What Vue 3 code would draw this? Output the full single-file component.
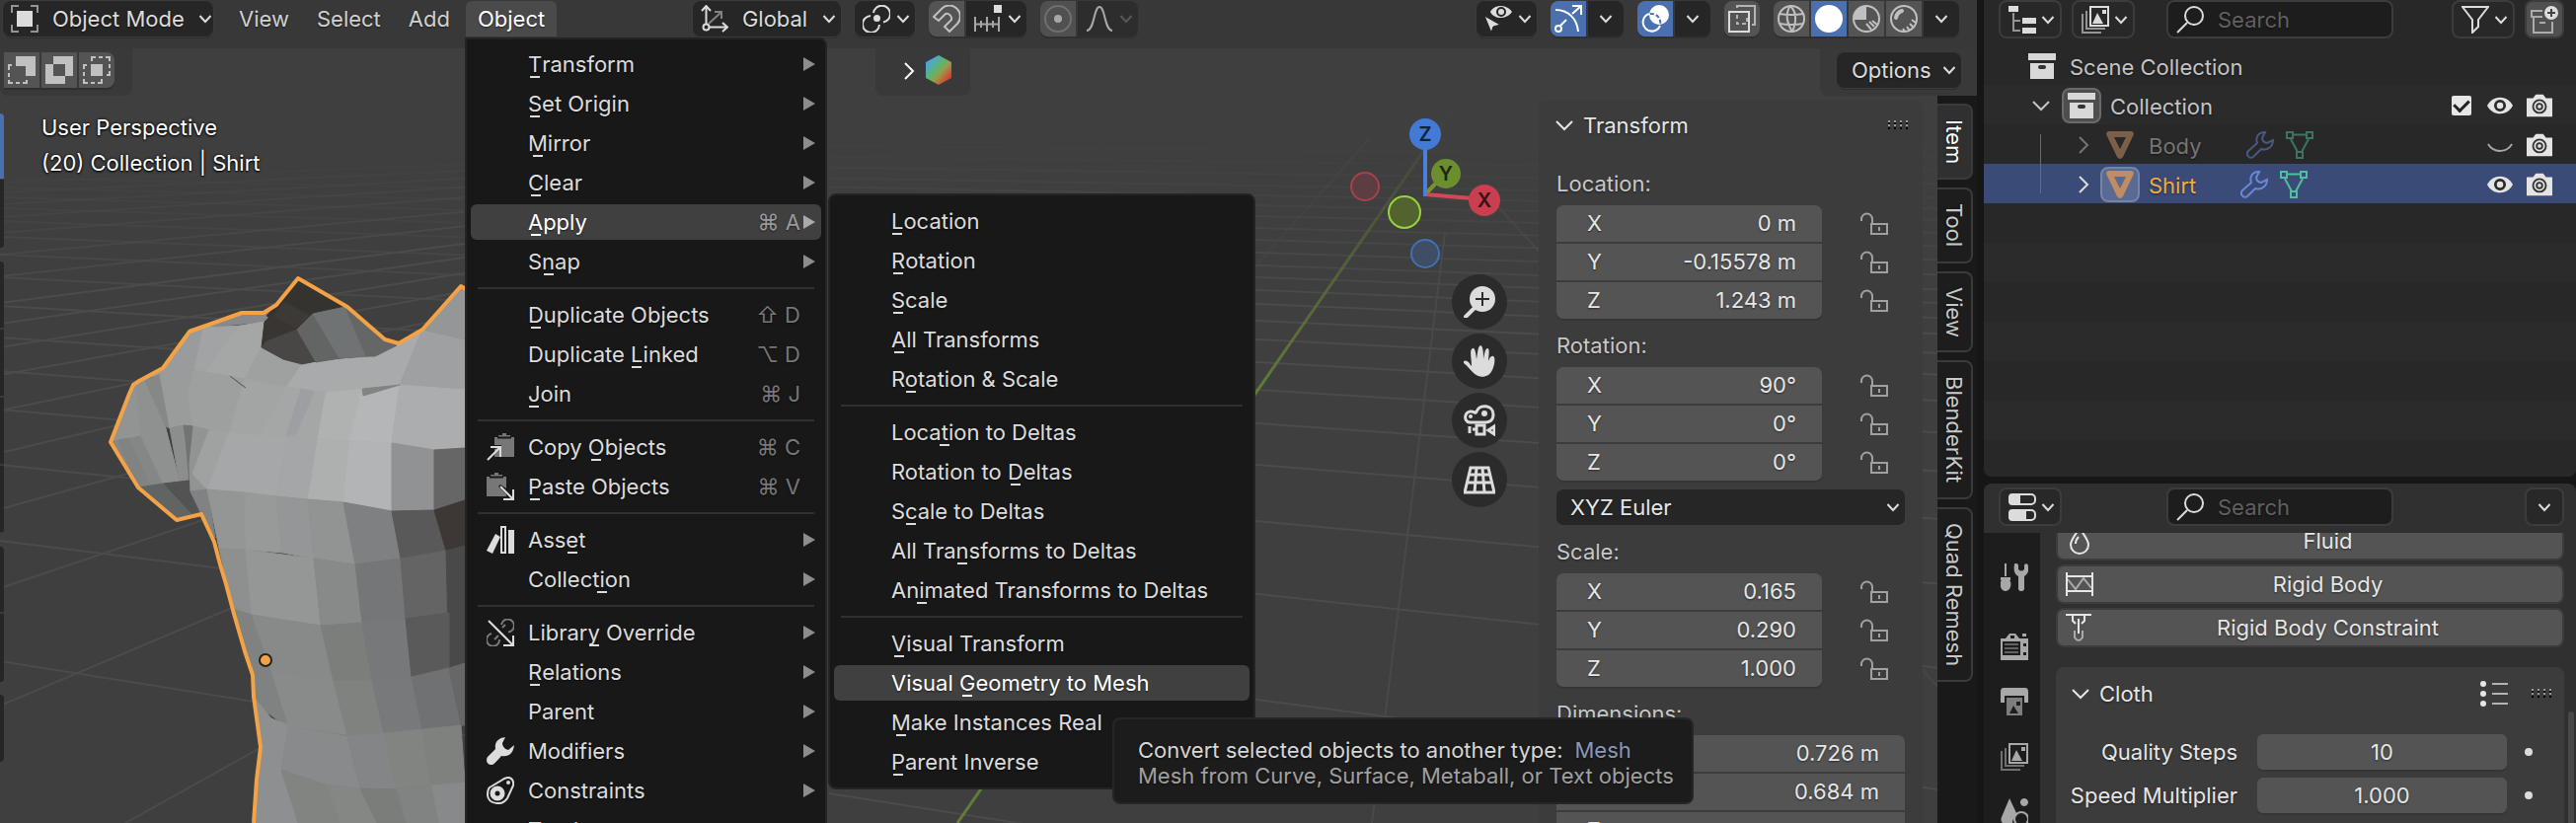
<script setup>
import { ref } from 'vue'

const split = (label) => {
  const i = label.indexOf('_')
  return i < 0
    ? { pre: label, key: '', post: '' }
    : { pre: label.slice(0, i), key: label[i + 1], post: label.slice(i + 2) }
}
const item = (label, extra = {}) => ({ ...split(label), ...extra })
const sep = { sep: true }

const applyMenu = [
  item('_Location'), item('_Rotation'), item('_Scale'), item('_All Transforms'), item('R_otation & Scale'),
  sep,
  item('Loca_tion to Deltas'), item('Rotation to _Deltas'), item('S_cale to Deltas'),
  item('All Tra_nsforms to Deltas'), item('An_imated Transforms to Deltas'),
  sep,
  item('_Visual Transform'), item('Visual _Geometry to Mesh', { tip: true }),
  item('_Make Instances Real'), item('_Parent Inverse'),
]

const objectMenu = [
  item('_Transform', { arrow: true }), item('_Set Origin', { arrow: true }),
  item('_Mirror', { arrow: true }), item('_Clear', { arrow: true }),
  item('_Apply', { arrow: true, keys: '⌘ A', sub: applyMenu }), item('S_nap', { arrow: true }),
  sep,
  item('_Duplicate Objects', { keys: '⇧ D' }), item('Duplicate _Linked', { keys: '⌥ D' }), item('_Join', { keys: '⌘ J' }),
  sep,
  item('Copy _Objects', { keys: '⌘ C', icon: 'copy' }), item('_Paste Objects', { keys: '⌘ V', icon: 'paste' }),
  sep,
  item('Ass_et', { arrow: true, icon: 'asset' }), item('Collect_ion', { arrow: true }),
  sep,
  item('Librar_y Override', { arrow: true, icon: 'override' }), item('_Relations', { arrow: true }),
  item('Parent', { arrow: true }), item('Modifiers', { arrow: true, icon: 'wrench' }),
  item('Constraints', { arrow: true, icon: 'constraint' }), item('Track', { arrow: true }),
]

const groups = ref([
  { name: 'Location', lock: true, rows: [['X', '0 m'], ['Y', '-0.15578 m'], ['Z', '1.243 m']] },
  { name: 'Rotation', lock: true, rows: [['X', '90°'], ['Y', '0°'], ['Z', '0°']], mode: 'XYZ Euler' },
  { name: 'Scale', lock: true, rows: [['X', '0.165'], ['Y', '0.290'], ['Z', '1.000']] },
  { name: 'Dimensions', lock: false, rows: [['X', '0.726 m'], ['Y', '0.684 m'], ['Z', '']] },
])
const tabs = ['Item', 'Tool', 'View', 'BlenderKit', 'Quad Remesh']
const navs = ['nav-zoom', 'nav-hand', 'nav-camera', 'nav-grid']
const navNames = ['Zoom', 'Pan', 'Camera view', 'Perspective']
const physics = [['Fluid', 'fluid'], ['Rigid Body', 'rigid'], ['Rigid Body Constraint', 'rigidcon']]
const cloth = [['Quality Steps', '10'], ['Speed Multiplier', '1.000']]
const propTabs = [['tools', 'Tool'], ['render', 'Render'], ['output', 'Output'], ['viewlayer', 'View Layer'], ['scene', 'Scene']]

/* floor grid: y on the left edge and slope of each line */
const leftDown = [180, 190, 200, 211, 224, 240, 258, 281, 310, 342, 376, 415, 471, 548, 670].map((y) => ({
  x1: 0, y1: y, x2: 472, y2: y + 472 * (y - 100) * 0.00028, o: Math.min(1, (y - 150) / 150),
}))
const leftUp = [185, 195, 207, 220, 236, 258, 280, 307, 328, 352, 380, 416, 459, 516, 596, 715, 905].map((y) => ({
  x1: 0, y1: y, x2: 472, y2: y - 472 * (y - 130) * 0.00072, o: Math.min(1, (y - 150) / 150),
}))
const right = [140, 152, 164, 176, 188, 198, 208, 219, 231, 243, 256, 269, 281, 294, 308, 325, 344, 367, 395, 429, 471, 528, 602, 709].map((y) => ({
  x1: 840, y1: y - 434 * (0.02 + (y - 200) * 0.00022), x2: 2004, y2: y + 730 * (0.02 + (y - 200) * 0.00022), o: Math.max(0.1, Math.min(1, (y - 120) / 180)),
}))
const floor = [
  ...leftDown, ...leftUp, ...right,
  { x1: 840, y1: 804, x2: 1100, y2: 845, o: 1 },
  { x1: 1464, y1: 236, x2: 1390, y2: 834, o: 0.9 },
  { x1: 1388, y1: 140, x2: 1270, y2: 272, o: 0.35 },
  { x1: 1500, y1: 190, x2: 2004, y2: 740, o: 0.7 },
]

const faces = [
  ['112,448 133,394 138,387 143,386 143,442', '#929494'],
  ['112,448 143,442 165,490 140,494', '#848786'],
  ['120,446 130,444 152,492 140,494', '#808382'],
  ['138,387 150,380 168,434 182,488 165,490 143,442', '#8f9191'],
  ['147,386 162,379 172,434 168,432', '#858886'],
  ['162,379 197,375 212,400 196,432 186,431 172,434', '#999c9b'],
  ['172,434 186,431 188,445 191,487 182,488', '#8b8e8c'],
  ['186,431 196,432 192,487 188,445', '#717473'],
  ['140,494 166,490 196,522 179,527', '#606463'],
  ['166,490 191,487 204,521 196,522', '#535353'],
  ['165,373 192,336 206,332 197,375 162,379 150,383', '#999b9c'],
  ['192,334 245,317 267,317 280,309 268,326 206,332', '#87898c'],
  ['206,332 243,330 232,343 208,377 197,375', '#a1a3a4'],
  ['243,330 268,326 265,352 248,384 208,377 232,343', '#a5a7a6'],
  ['265,352 287,364 306,369 290,392 248,384', '#9fa1a0'],
  ['306,369 345,364 380,361 404,348 428,334 405,390 330,398 290,392', '#a8aaab'],
  ['428,334 471,344 471,395 405,390', '#9fa0a1'],
  ['428,334 467,290 471,292 471,344', '#949698'],
  ['197,375 248,384 232,438 212,436 196,432 190,400', '#9da09f'],
  ['248,384 290,392 262,441 232,438', '#a3a5a4'],
  ['290,392 330,398 322,445 262,441', '#a5a7a7'],
  ['305,394 318,397 300,440 290,442', '#9d9fa2'],
  ['330,398 367,394 354,447 322,445', '#b0b2b2'],
  ['367,394 405,390 397,449 354,447', '#b5b6b8'],
  ['405,390 471,395 471,454 440,456 397,449', '#abadae'],
  ['367,394 405,390 368,401', '#828484'],
  ['233,381 240,386 249,393 243,389', '#696b6b'],
  ['196,432 212,436 210,496 193,498 192,470', '#929494'],
  ['212,436 232,438 210,496 195,480', '#a0a2a1'],
  ['232,438 262,441 292,443 281,503 210,496', '#a6a7a8'],
  ['292,443 322,445 312,506 281,503', '#a5a6a8'],
  ['322,445 354,447 348,509 312,506', '#aeb0b0'],
  ['354,447 397,449 397,518 348,509', '#b3b4b6'],
  ['397,449 440,456 440,517 397,518', '#909294'],
  ['440,456 471,454 471,507 440,517', '#666'],
  ['193,498 210,496 218,545 204,521', '#808383'],
  ['210,496 248,499 249,557 222,556', '#949695'],
  ['248,499 280,503 286,560 249,557', '#989a99'],
  ['280,503 312,506 318,566 286,560', '#949697'],
  ['312,506 348,509 360,572 318,566', '#929493'],
  ['348,509 397,518 406,566 360,572', '#7e8082'],
  ['397,518 440,517 452,558 406,566', '#595959'],
  ['440,517 471,507 471,553 452,558', '#3d3736'],
  ['222,556 249,557 255,623 236,617', '#8d908f'],
  ['249,557 318,566 325,634 255,623', '#959796'],
  ['318,566 360,572 367,631 325,634', '#888a8a'],
  ['360,572 406,566 411,627 367,631', '#757678'],
  ['406,566 452,558 455,621 411,627', '#646464'],
  ['452,558 471,553 471,675 455,677', '#494949'],
  ['236,617 255,623 275,680 292,738 258,712 256,684', '#7f8281'],
  ['255,623 325,634 338,690 275,680', '#888a89'],
  ['325,634 367,631 377,689 338,690', '#7c7e7c'],
  ['367,631 411,627 417,686 377,689', '#77787a'],
  ['411,627 455,621 455,677 417,686', '#5a5a5a'],
  ['257,706 275,728 295,736 320,834 257,834 264,757', '#8d8f91'],
  ['275,680 338,690 352,745 292,736', '#898b8a'],
  ['338,690 377,689 389,743 352,746', '#80827f'],
  ['377,689 417,686 428,739 389,743', '#78797b'],
  ['417,686 455,677 467,735 428,739', '#707173'],
  ['455,677 471,672 471,735 467,735', '#666769'],
  ['292,736 352,746 365,799 330,795 285,780', '#898a8b'],
  ['352,746 389,743 402,800 365,799', '#848587'],
  ['389,743 428,739 437,796 402,800', '#828482'],
  ['428,739 467,735 471,793 437,796', '#7f817f'],
  ['285,780 330,795 345,834 302,834', '#828482'],
  ['330,795 365,799 382,834 345,834', '#858785'],
  ['365,799 402,800 412,834 382,834', '#7b7d7b'],
  ['402,800 437,796 445,834 412,834', '#818382'],
  ['437,796 471,793 471,834 445,834', '#88898b'],
  ['302,282 350,311 317,318 301,334 270,320 280,309', '#353330'],
  ['288,306 315,320 301,334 276,322', '#3d3936'],
  ['268,326 276,320 301,334 270,347 265,352', '#383532'],
  ['301,334 320,366 306,369 287,364 265,352 270,346', '#494745'],
  ['317,318 344,363 320,367 301,334', '#636464'],
  ['317,318 350,311 372,361 344,363', '#707373'],
  ['350,311 388,345 402,350 380,361 371,361', '#656767'],
]
const outline = '257,834 260,790 264,757 257,706 256,684 248,660 237,622 229,592 223,572 217,549 204,521 179,527 140,494 112,448 131,399 135,390 141,386 165,373 192,336 245,317 267,317 280,309 302,282 352,311 390,344 404,348 428,334 467,290 474,294'
</script>

<template>
  <svg class="defs" aria-hidden="true">
    <symbol id="chev" viewBox="0 0 14 10"><path d="M1.500 2L7 8L12.500 2" class="st" /></symbol>
    <symbol id="chev-r" viewBox="0 0 12 20"><path d="M2 2L10 10L2 18" class="st" /></symbol>
    <symbol id="chev-d" viewBox="0 0 20 12"><path d="M2 2L10 10L18 2" class="st" /></symbol>
    <symbol id="tri" viewBox="0 0 12 14"><path d="M0 0L12 7L0 14Z" fill="currentColor" /></symbol>
    <symbol id="mode" viewBox="0 0 28 28"><path d="M1 8V1H8M20 1H27V8M27 20V27H20M8 27H1V20" class="st" opacity=".6" /><path d="M6 6H22V22H6Z" fill="currentColor" /></symbol>
    <symbol id="sel-sub" viewBox="0 0 28 28"><path d="M8 0H28V20H18V10H8Z" fill="currentColor" /><path d="M4 9H1V14M1 17V21M1 24V27H5M8 27H12M15 27H19V24" class="st" /></symbol>
    <symbol id="sel-dif" viewBox="0 0 28 28"><path d="M8 0H28V20H20V28H0V8H8ZM8 8V20H20V8Z" fill-rule="evenodd" fill="currentColor" /></symbol>
    <symbol id="sel-int" viewBox="0 0 28 28"><path d="M8 8H20V20H8Z" fill="currentColor" /><path d="M4 9H1V13M1 16V20M1 23V27H5M8 27H12M15 27H19V23M9 5V1H13M16 1H20M23 1H27V5M27 8V12M27 15V19H24" class="st" /></symbol>
    <symbol id="orient" viewBox="0 0 28 28"><g class="st"><path d="M5.500 19V1M1 6L5.500 1L10 6M9 22.500H26M22 18L27 22.500L22 27" /><circle cx="5.500" cy="22.500" r="3" /><path d="M8 19L20 8M14 7H21V14" opacity=".5" /></g></symbol>
    <symbol id="pivot" viewBox="0 0 28 28"><g class="st"><path d="M11 8A8.500 8.500 0 1 1 21 17.500" /><path d="M8 11A8.500 8.500 0 1 0 17 20" /></g><circle cx="14.500" cy="13.500" r="3.500" fill="currentColor" /></symbol>
    <symbol id="magnet" viewBox="0 0 28 28"><path d="M1 12L10 3A11 11 0 0 1 25 19L17 27L12 22L19 15A5 5 0 0 0 13 9L6 16Z" class="st" /></symbol>
    <symbol id="increment" viewBox="0 0 28 28"><path d="M20 0H28V8H20Z" fill="currentColor" /><path d="M1 12V27M13 12V27M25 12V27M1 19.500H25M7 16V23M19 16V23" class="st" opacity=".7" /></symbol>
    <symbol id="prop" viewBox="0 0 28 28"><circle cx="14" cy="14" r="13" class="st" opacity=".35" /><circle cx="14" cy="14" r="4" fill="currentColor" /></symbol>
    <symbol id="bell" viewBox="0 0 28 28"><path d="M1 26C9 26 8 2 14 2S19 26 27 26" class="st" /></symbol>
    <symbol id="visible" viewBox="0 0 28 28"><path d="M6 7C10 -1 23 -1 28 7C23 15 10 15 6 7Z" fill="currentColor" /><circle cx="17" cy="7" r="4" fill="none" stroke="#262626" stroke-width="2" /><path d="M0 11L16 20L9 22L7 28Z" fill="currentColor" stroke="#262626" /></symbol>
    <symbol id="gizmo" viewBox="0 0 28 28"><g class="st"><path d="M1 5C14 5 23 14 24 27M6 21L12 15M18 9L27 1M18 1H27V10" /><circle cx="4" cy="24" r="3" /></g></symbol>
    <symbol id="overlay" viewBox="0 0 28 28"><circle cx="18" cy="10" r="10" fill="currentColor" /><path d="M8 9A9 9 0 1 0 19 21" class="st" /><path d="M9 9A9 9 0 0 1 19 20" fill="none" stroke="#4a70b0" stroke-width="2" stroke-dasharray="4 2" /></symbol>
    <symbol id="xray" viewBox="0 0 28 28"><g class="st"><path d="M1 7H21V27H1Z" /><path d="M9 3V1H27V20H24" opacity=".7" /><path d="M9 10V19H19V13" stroke-dasharray="4 3" opacity=".7" /></g></symbol>
    <symbol id="wire" viewBox="0 0 28 28"><g class="st"><circle cx="14" cy="14" r="13" /><path d="M13 1C7 9 10 20 15 27M13 1C21 9 18 20 15 27M2 9Q14 11 26 9M2 19Q14 21 26 19" /></g></symbol>
    <symbol id="solid" viewBox="0 0 28 28"><circle cx="14" cy="14" r="14" fill="currentColor" /></symbol>
    <symbol id="material" viewBox="0 0 28 28"><circle cx="14" cy="14" r="13" class="st" /><path d="M14 1V15H1A13 13 0 0 1 14 1Z" fill="currentColor" /><path d="M14 19L19 25M17 17L22 22M20 16L25 20" class="st" /></symbol>
    <symbol id="rendered" viewBox="0 0 28 28"><circle cx="14" cy="14" r="13" class="st" /><path d="M6 13A9 9 0 0 1 12 6" fill="none" stroke="currentColor" stroke-width="4" stroke-linecap="round" /><path d="M13 24L15 27M17 22L20 26M20 19L24 23M22 15L26 18" class="st" /></symbol>
    <symbol id="copy" viewBox="0 0 28 28"><path d="M8 4H12V2H16V0H20V2H24V4H28V24H8V16L15 14V12H8Z" fill="#777" /><path d="M11 4.500H25" stroke="#181818" stroke-width="2" /><path d="M1 27L13 15M4 14H14V24" class="st" /></symbol>
    <symbol id="paste" viewBox="0 0 28 28"><path d="M0 4H4V2H8V0H12V2H16V4H20V16L14 12L12 14L20 22V24H0Z" fill="#777" /><path d="M3 4.500H17" stroke="#181818" stroke-width="2" /><path d="M14 14L26 26M27 17V27H17" class="st" /></symbol>
    <symbol id="asset" viewBox="0 0 28 28"><path d="M9 8L14 11L6 28L0 25ZM22 4H28V28H22Z" fill="currentColor" /><path d="M15 1H19V27H15Z" class="st" /></symbol>
    <symbol id="override" viewBox="0 0 28 28"><g class="st"><path d="M15 6A6.500 6.500 0 1 1 22 13.500M16 9L19 6M5 15A6.500 6.500 0 1 0 13 21M8 21L12 17" opacity=".5" /><path d="M2 2L26 26M27 17V27H17" /></g></symbol>
    <symbol id="wrench" viewBox="0 0 28 28"><path d="M19 0C11 1 8 6 9 12L1 20C-1 23 0 28 5 28C7 28 8 27 15 19C22 20 27 17 28 8L22 13C18 12 16 9 16 6Z" fill="currentColor" /></symbol>
    <symbol id="constraint" viewBox="0 0 28 28"><path d="M3 11L18 2C24 -1 28 3 27 9L21 22C16 30 2 28 1 19C1 15 1 13 3 11Z" class="st" /><circle cx="22" cy="6" r="2" fill="currentColor" /><circle cx="11" cy="17" r="5" fill="none" stroke="currentColor" stroke-width="5" /></symbol>
    <symbol id="lock" viewBox="0 0 28 28"><g class="st"><path d="M1 11V9A5.500 5.500 0 0 1 12 9V14M11 14H27V24H11Z" /><path d="M19 17V21" /></g></symbol>
    <symbol id="nav-zoom" viewBox="0 0 32 32"><circle cx="19" cy="13" r="13" fill="currentColor" /><path d="M10 23L2 31" stroke="currentColor" stroke-width="4" stroke-linecap="round" /><path d="M19 6V20M12 13H26" stroke="#2b2b2b" stroke-width="2" /></symbol>
    <symbol id="nav-hand" viewBox="0 0 32 32"><path d="M0 18C-1 14 5 15 7 20L8 21C8 14 6 6 8 4C10 1 12 3 13 14C14 10 14 1 17 0C20 0 20 10 20 14C21 8 22 3 24 3C27 3 25 12 25 16C26 13 28 10 30 11C33 12 31 26 25 30C20 33 14 32 10 28C6 24 4 21 0 18Z" fill="currentColor" /></symbol>
    <symbol id="nav-camera" viewBox="0 0 32 32"><g class="st" style="stroke-width:3"><path d="M6 18C-1 17 1 6 8 7C11 7 12 10 13 7C16 -1 30 0 30 10C30 16 26 18 22 18Z" /><path d="M13 21H21V30H13ZM9 25H13M6 22V29M31 22V30L25 26Z" /></g><circle cx="7" cy="12" r="2" fill="currentColor" /><circle cx="21" cy="9" r="3" fill="currentColor" /></symbol>
    <symbol id="nav-grid" viewBox="0 0 32 32"><path d="M7 4H25L31 29H1ZM5 11H27M3 19H29M13 4L11 29M19 4L21 29" fill="none" stroke="currentColor" stroke-width="3" /></symbol>
    <symbol id="tree" viewBox="0 0 28 28"><path d="M0 0H10V6H0ZM14 12H28V18H14ZM14 22H28V28H14Z" fill="currentColor" /><path d="M5 7V25H12M5 15H12" class="st" opacity=".6" /></symbol>
    <symbol id="images" viewBox="0 0 28 28"><path d="M9 1H27V20H9Z" class="st" /><path d="M11 18L16 7L22 18ZM21 4H25V8H21Z" fill="currentColor" /><path d="M5 5V23H24M1 8V27H20" class="st" opacity=".6" /></symbol>
    <symbol id="search" viewBox="0 0 28 28"><circle cx="18" cy="10" r="9" class="st" /><path d="M11 17L1 27" class="st" /></symbol>
    <symbol id="filter" viewBox="0 0 28 28"><path d="M1 1H27L17 14V21L11 27V14Z" class="st" /></symbol>
    <symbol id="newcoll" viewBox="0 0 28 28"><path d="M12 5H1V11H3V27H22V16M3 11H12M9 17H15" class="st" opacity=".65" /><circle cx="21" cy="7" r="7" fill="currentColor" /><path d="M21 3V11M17 7H25" stroke="#444" stroke-width="2" /></symbol>
    <symbol id="coll" viewBox="0 0 28 28"><path d="M0 1H28V8H0ZM2 11H26V27H2Z" fill="currentColor" /><rect x="10" y="13" width="8" height="4" rx="2" fill="#333" /></symbol>
    <symbol id="obj" viewBox="0 0 28 28"><path d="M2 0H26Q28 1 28 3L17 26Q14 30 11 26L0 3Q0 1 2 0ZM8 6L14 18L20 6Z" fill-rule="evenodd" fill="currentColor" /></symbol>
    <symbol id="wrench-o" viewBox="0 0 28 28"><path d="M19 1C12 1 9 6 11 12L2 20C-1 23 3 29 7 26L15 18C22 20 27 15 27 9L21 12C18 12 16 9 16 7Z" class="st" /></symbol>
    <symbol id="mesh" viewBox="0 0 28 28"><g class="st"><path d="M1 1H7V7H1ZM21 1H27V7H21ZM11 21H17V27H11ZM7 3.500H21M5 8L12 21M23 8L16 21" /></g></symbol>
    <symbol id="eye" viewBox="0 0 28 28"><path d="M0 14C6 2 22 2 28 14C22 26 6 26 0 14Z" fill="currentColor" /><circle cx="14" cy="14" r="5" fill="none" stroke="#2b2b2b" stroke-width="3" /></symbol>
    <symbol id="closed" viewBox="0 0 28 28"><path d="M1 13C7 23 21 23 27 13" class="st" /></symbol>
    <symbol id="cam" viewBox="0 0 28 28"><path d="M0 6H7L10 2H18L21 6H28V26H0Z" fill="currentColor" /><circle cx="14" cy="15" r="7" fill="none" stroke="#333" stroke-width="2" /><circle cx="14" cy="15" r="3" fill="none" stroke="#333" stroke-width="2" /></symbol>
    <symbol id="toggles" viewBox="0 0 28 28"><rect x="1" y="1" width="26" height="10" rx="4" class="st" /><rect x="1" y="17" width="26" height="10" rx="4" class="st" /><path d="M4 0H12V12H4Q0 12 0 8V4Q0 0 4 0ZM4 16H18V28H4Q0 28 0 24V20Q0 16 4 16Z" fill="currentColor" /></symbol>
    <symbol id="fluid" viewBox="0 0 28 28"><path d="M14 1C10 8 5 13 5 18A9 9 0 0 0 23 18C23 13 18 8 14 1ZM10 17Q10 13 13 10" class="st" /></symbol>
    <symbol id="rigid" viewBox="0 0 28 28"><g class="st"><path d="M1 2V26M27 2V26M1 6H27M1 21H27" /><path d="M2 9L10 19L18 8L26 18" opacity=".6" /></g></symbol>
    <symbol id="rigidcon" viewBox="0 0 28 28"><g class="st"><path d="M0 1H26M7 2V7L10 10M19 2V7L16 10M13 5V20" /><path d="M9 17V24Q13 30 17 24V17" opacity=".6" /></g></symbol>
    <symbol id="tools" viewBox="0 0 28 28"><path d="M5 0V13" stroke="currentColor" stroke-width="2" /><path d="M0 14H10V17H9C12 20 10 28 5 28S-2 20 1 17H0ZM14 1C14 -1 18 0 18 2V6Q21 9 24 6V2C24 0 28 -1 28 3C29 8 27 11 24 13V26C23 29 19 29 18 26V13C14 11 13 7 14 1Z" fill="currentColor" /></symbol>
    <symbol id="render" viewBox="0 0 28 28"><path d="M0 6H5L9 1H15L19 6H28V28H0ZM22 1H26V4H22ZM2 9V23H20V9ZM10 3V6H14V3ZM23 11V14H26V11ZM23 20V23H26V20Z" fill-rule="evenodd" fill="currentColor" /><path d="M4 12H18M4 16H18M4 20H18" class="st" opacity=".5" /></symbol>
    <symbol id="output" viewBox="0 0 28 28"><path d="M3 0H25Q28 0 28 4V15H24V8H4V15H0V4Q0 0 3 0Z" fill="currentColor" /><path d="M6 10H22V28H6Z" fill="currentColor" opacity=".7" /><path d="M9 26L13 18L18 26ZM16 14H20V18H16Z" fill="#1d1d1d" /></symbol>
    <symbol id="scene" viewBox="0 0 28 28"><path d="M9 0L17 17C12 19 12 24 12 28C3 28 -1 24 1 19ZM24 0A4 4 0 1 1 23.900 0Z" fill="currentColor" /><circle cx="21" cy="21" r="7" class="st" /></symbol>
    <symbol id="viewlayer" viewBox="0 0 28 28"><use href="#images" /></symbol>
    <symbol id="list" viewBox="0 0 28 28"><circle cx="3" cy="4" r="3" fill="currentColor" /><circle cx="3" cy="14" r="3" fill="currentColor" /><circle cx="3" cy="24" r="3" fill="currentColor" /><path d="M12 4H28M12 14H28M12 24H28" class="st" opacity=".7" /></symbol>
    <symbol id="grip" viewBox="0 0 20 10"><path d="M0 1H20M0 5H20" stroke="#999" stroke-width="2" stroke-dasharray="2 4" /><path d="M0 3H20M0 8H20" stroke="#000" stroke-width="2" stroke-dasharray="2 4" /></symbol>
  </svg>

  <div class="app">
    <section class="view3d" aria-label="3D Viewport">
      <svg class="canvas" viewBox="0 0 2004 834" preserveAspectRatio="xMinYMin slice">
        <defs>
          <linearGradient id="gy" gradientUnits="userSpaceOnUse" x1="1475" y1="106" x2="1274" y2="400">
            <stop offset="0" stop-color="#5d7535" stop-opacity="0" /><stop offset="1" stop-color="#607c36" />
          </linearGradient>
        </defs>
        <line v-for="(l, i) in floor" :key="i" :x1="l.x1" :y1="l.y1" :x2="l.x2" :y2="l.y2" stroke="#4b4b4b" stroke-width="2" :opacity="l.o" />
        <line x1="1475" y1="106" x2="970" y2="834" stroke="url(#gy)" stroke-width="3" />
        <polygon v-for="(f, i) in faces" :key="'f' + i" :points="f[0]" :fill="f[1]" :stroke="f[1]" />
        <polyline :points="outline" fill="none" stroke="#f3a346" stroke-width="4" stroke-linejoin="round" />
        <circle cx="269" cy="669" r="6" fill="#f3a346" stroke="#222" stroke-width="2" />
      </svg>

      <header class="bar">
        <button class="dark mode"><svg class="i"><use href="#mode" /></svg>Object Mode<svg class="c"><use href="#chev" /></svg></button>
        <nav class="menus">
          <button>View</button><button>Select</button><button>Add</button>
          <div class="anchor">
            <button class="open">Object</button>
            <ul class="menu main" role="menu">
              <li v-for="(m, i) in objectMenu" :key="i" :class="m.sep ? 'sep' : 'row'" :role="m.sep ? 'separator' : 'none'">
                <button v-if="!m.sep" class="entry" :class="{ hot: m.sub }" role="menuitem">
                  <span class="slot"><svg v-if="m.icon" class="i"><use :href="'#' + m.icon" /></svg></span>
                  <span class="label">{{ m.pre }}<u v-if="m.key">{{ m.key }}</u>{{ m.post }}</span>
                  <kbd v-if="m.keys">{{ m.keys }}</kbd>
                  <span class="arrow"><svg v-if="m.arrow"><use href="#tri" /></svg></span>
                </button>
                <ul v-if="m.sub" class="menu sub" role="menu">
                  <li v-for="(s, j) in m.sub" :key="j" :class="s.sep ? 'sep' : 'row'" :role="s.sep ? 'separator' : 'none'">
                    <button v-if="!s.sep" class="entry" :class="{ hot: s.tip }" role="menuitem">
                      <span class="slot"></span><span class="label">{{ s.pre }}<u>{{ s.key }}</u>{{ s.post }}</span>
                    </button>
                    <div v-if="s.tip" class="tip" role="tooltip">
                      <p>Convert selected objects to another type:<b>Mesh</b></p>
                      <p class="dim">Mesh from Curve, Surface, Metaball, or Text objects</p>
                    </div>
                  </li>
                </ul>
              </li>
            </ul>
          </div>
        </nav>
        <div class="grow2"></div>
        <div class="cluster">
          <button class="dark global"><svg class="i"><use href="#orient" /></svg>Global<svg class="c"><use href="#chev" /></svg></button>
          <button class="dark pair" aria-label="Pivot"><svg class="i"><use href="#pivot" /></svg><svg class="c"><use href="#chev" /></svg></button>
          <div class="group"><button class="cell mid soft" aria-label="Snap"><svg class="i"><use href="#magnet" /></svg></button><button class="cell pair" aria-label="Snap to"><svg class="i"><use href="#increment" /></svg><svg class="c"><use href="#chev" /></svg></button></div>
          <div class="group faint"><button class="cell mid" aria-label="Proportional editing"><svg class="i"><use href="#prop" /></svg></button><button class="cell pair" aria-label="Falloff"><svg class="i"><use href="#bell" /></svg><svg class="c"><use href="#chev" /></svg></button></div>
        </div>
        <div class="grow5"></div>
        <div class="cluster">
          <button class="dark pair" aria-label="Visibility"><svg class="i"><use href="#visible" /></svg><svg class="c"><use href="#chev" /></svg></button>
          <div class="group"><button class="cell blue" aria-label="Gizmos"><svg class="i"><use href="#gizmo" /></svg></button><button class="cell" aria-label="Gizmo options"><svg class="c"><use href="#chev" /></svg></button></div>
          <div class="group"><button class="cell blue" aria-label="Overlays"><svg class="i"><use href="#overlay" /></svg></button><button class="cell" aria-label="Overlay options"><svg class="c"><use href="#chev" /></svg></button></div>
          <div class="group"><button class="cell mid" aria-label="X-ray"><svg class="i"><use href="#xray" /></svg></button></div>
          <div class="group"><button class="cell mid soft" aria-label="Wireframe"><svg class="i"><use href="#wire" /></svg></button><button class="cell blue" aria-label="Solid"><svg class="i"><use href="#solid" /></svg></button><button class="cell mid soft" aria-label="Material"><svg class="i"><use href="#material" /></svg></button><button class="cell mid soft" aria-label="Rendered"><svg class="i"><use href="#rendered" /></svg></button><button class="cell" aria-label="Shading options"><svg class="c"><use href="#chev" /></svg></button></div>
        </div>
      </header>

      <div class="toolbar2">
        <div class="pad left"><div class="group"><button class="cell mid soft" aria-label="Subtract"><svg class="i"><use href="#sel-sub" /></svg></button><button class="cell mid soft" aria-label="Difference"><svg class="i"><use href="#sel-dif" /></svg></button><button class="cell mid soft" aria-label="Intersect"><svg class="i"><use href="#sel-int" /></svg></button></div></div>
        <div class="grow7"></div>
        <div class="pad center">
          <svg class="cr"><use href="#chev-r" /></svg>
          <svg class="hex" viewBox="0 0 26 30"><defs><linearGradient id="hx" x1="0" y1="0" x2="1" y2="1"><stop offset=".15" stop-color="#4aa5e0" /><stop offset=".45" stop-color="#5fb56a" /><stop offset=".6" stop-color="#9a9a4a" /><stop offset=".85" stop-color="#dd3b30" /></linearGradient></defs><path d="M13 0L26 7V23L13 30L0 23V7Z" fill="url(#hx)" /></svg>
        </div>
        <div class="grow8"></div>
        <div class="pad right"><button class="dark options">Options<svg class="c"><use href="#chev" /></svg></button></div>
      </div>

      <div class="stage">
        <div class="tools"><i class="t on"></i><i class="t one"></i><i class="t four"></i><i class="t two"></i><i class="t last"></i></div>
        <div class="stats"><p>User Perspective</p><p>(20) Collection | Shirt</p></div>
        <div class="navcol">
          <svg class="axes" viewBox="0 0 160 160">
            <circle cx="19" cy="72" r="14" fill="#5c3d42" stroke="#a8404e" stroke-width="2" />
            <path d="M80 80L101 58" stroke="#74962e" stroke-width="4" />
            <circle cx="101" cy="59" r="15" fill="#6b8e2f" />
            <path d="M80 80L140 85" stroke="#d14856" stroke-width="4" />
            <path d="M80 82V19" stroke="#4a80d9" stroke-width="4" />
            <circle cx="80" cy="19" r="16" fill="#427ad6" /><circle cx="140" cy="86" r="16" fill="#c93f50" />
            <circle cx="59" cy="98" r="16" fill="#53632f" stroke="#97d43a" stroke-width="2" />
            <circle cx="80" cy="140" r="14" fill="#3f4e63" stroke="#3f70b8" stroke-width="2" />
            <text x="80" y="26" fill="#12233d">Z</text><text x="101" y="66" fill="#1f290d">Y</text><text x="140" y="93" fill="#3b1118">X</text>
          </svg>
          <button v-for="(n, i) in navs" :key="n" class="round" :aria-label="navNames[i]"><svg><use :href="'#' + n" /></svg></button>
        </div>
        <aside class="npanel">
          <h3><svg class="cd"><use href="#chev-d" /></svg>Transform<svg class="grip"><use href="#grip" /></svg></h3>
          <div v-for="g in groups" :key="g.name" class="block">
            <p class="cap">{{ g.name }}:</p>
            <div class="fields">
              <div class="stack">
                <label v-for="r in g.rows" :key="r[0]" class="field"><span>{{ r[0] }}</span><input v-model="r[1]" type="text" /></label>
              </div>
              <div v-if="g.lock" class="locks"><button v-for="r in g.rows" :key="r[0]" :aria-label="'Lock ' + g.name + ' ' + r[0]"><svg class="i"><use href="#lock" /></svg></button></div>
            </div>
            <div v-if="g.mode" class="select"><select aria-label="Rotation mode"><option>{{ g.mode }}</option></select><svg class="c"><use href="#chev" /></svg></div>
          </div>
        </aside>
        <nav class="tabs"><button v-for="(t, i) in tabs" :key="t" :class="{ on: i === 0 }"><span>{{ t }}</span></button></nav>
      </div>
    </section>

    <div class="side">
      <section class="outliner">
        <header class="ohead">
          <button class="obtn" aria-label="Display mode"><svg class="i"><use href="#tree" /></svg><svg class="c"><use href="#chev" /></svg></button>
          <button class="obtn second" aria-label="View layer"><svg class="i"><use href="#images" /></svg><svg class="c"><use href="#chev" /></svg></button>
          <label class="search"><svg class="i"><use href="#search" /></svg><input type="text" placeholder="Search" aria-label="Search outliner" /></label>
          <button class="obtn push" aria-label="Filter"><svg class="i"><use href="#filter" /></svg><svg class="c"><use href="#chev" /></svg></button>
          <button class="obtn sq lit" aria-label="New collection"><svg class="i"><use href="#newcoll" /></svg></button>
        </header>
        <ul class="tree">
          <li class="lv0"><svg class="i"><use href="#coll" /></svg><span class="n">Scene Collection</span></li>
          <li class="lv1">
            <svg class="cd"><use href="#chev-d" /></svg><span class="badge"><svg class="i"><use href="#coll" /></svg></span><span class="n">Collection</span>
            <div class="flags"><input type="checkbox" checked aria-label="Include" /><svg class="e"><use href="#eye" /></svg><svg class="e"><use href="#cam" /></svg></div>
          </li>
          <li class="lv2 muted">
            <svg class="cr"><use href="#chev-r" /></svg><span class="badge none"><svg class="i o"><use href="#obj" /></svg></span><span class="n">Body</span>
            <svg class="i w"><use href="#wrench-o" /></svg><svg class="i m"><use href="#mesh" /></svg>
            <div class="flags"><svg class="e dimmed"><use href="#closed" /></svg><svg class="e"><use href="#cam" /></svg></div>
          </li>
          <li class="lv2 picked">
            <svg class="cr"><use href="#chev-r" /></svg><span class="badge tint"><svg class="i o"><use href="#obj" /></svg></span><span class="n name">Shirt</span>
            <svg class="i w"><use href="#wrench-o" /></svg><svg class="i m"><use href="#mesh" /></svg>
            <div class="flags"><svg class="e"><use href="#eye" /></svg><svg class="e"><use href="#cam" /></svg></div>
          </li>
        </ul>
      </section>

      <section class="props">
        <header class="ohead">
          <button class="obtn" aria-label="Editor type"><svg class="i"><use href="#toggles" /></svg><svg class="c"><use href="#chev" /></svg></button>
          <label class="search wide"><svg class="i"><use href="#search" /></svg><input type="text" placeholder="Search" aria-label="Search properties" /></label>
          <button class="obtn sq push" aria-label="Options"><svg class="c"><use href="#chev" /></svg></button>
        </header>
        <div class="pbody">
          <nav class="ptabs"><button v-for="t in propTabs" :key="t[0]" :aria-label="t[1]"><svg class="i"><use :href="'#' + t[0]" /></svg></button></nav>
          <div class="pmain">
            <div class="scroll">
              <button v-for="p in physics" :key="p[0]" class="phys"><svg class="i"><use :href="'#' + p[1]" /></svg><span>{{ p[0] }}</span></button>
              <div class="cloth">
                <h3><svg class="cd"><use href="#chev-d" /></svg>Cloth<svg class="i lst"><use href="#list" /></svg><svg class="grip"><use href="#grip" /></svg></h3>
                <label v-for="c in cloth" :key="c[0]" class="prow"><span>{{ c[0] }}</span><input type="text" :value="c[1]" /><i></i></label>
              </div>
            </div>
            <div class="bar-v"></div>
          </div>
        </div>
      </section>
    </div>
  </div>
</template>

<style>
body { background: #161616; overflow: hidden; }
</style>

<style scoped>
* { box-sizing: border-box; margin: 0; padding: 0; }
.defs { position: absolute; width: 0; height: 0; }
.st { fill: none; stroke: currentColor; stroke-width: 2; }
.app { display: flex; gap: 7px; height: 100vh; overflow: hidden; font: 22px/26px Inter, "Noto Sans", sans-serif; color: #dcdcdc; background: #161616; text-shadow: 0 1px 2px rgba(0, 0, 0, .5); }
button, input, select { font: inherit; color: inherit; text-shadow: inherit; border: 0; background: none; outline: 0; white-space: nowrap; }
ul { list-style: none; }
svg { flex: none; display: block; }
.i { width: 28px; height: 28px; }
.c { width: 14px; height: 10px; }
.cd { width: 20px; height: 12px; }
.cr { width: 12px; height: 20px; }

.view3d { position: relative; flex: 1; min-width: 0; display: flex; flex-direction: column; overflow: hidden; background: #3f3f3f; }
.canvas { position: absolute; inset: 0; width: 100%; height: 100%; }
.bar { position: relative; z-index: 3; display: flex; align-items: flex-start; height: 49px; padding: 1px 18px 0 3px; background: #383838; }
.dark { display: flex; align-items: center; height: 36px; background: #262626; border-radius: 8px; box-shadow: 0 0 0 1px #3b3b3b, 0 2px 0 #2e2e2e; }
.mode { flex: none; width: 213px; padding: 0 5px 0 8px; gap: 14px; }
.mode .c { margin-left: auto; }
.menus { display: flex; gap: 4px; margin-left: 14px; }
.menus > button, .open { height: 36px; padding: 0 12px; color: #d0d0d0; }
.anchor { position: relative; }
.anchor .open { background: #4a4a4a; border-radius: 6px 6px 0 0; color: #fff; }
.grow2 { flex: 2; } .grow5 { flex: 5; }
.cluster { display: flex; gap: 14px; }
.global { width: 150px; padding: 0 5px 0 8px; justify-content: space-between; }
.pair { display: flex; align-items: center; width: 61px; padding: 0 5px 0 8px; justify-content: space-between; }
.group { display: flex; gap: 2px; border-radius: 8px; overflow: hidden; box-shadow: 0 2px 0 #303030; }
.cell { display: flex; align-items: center; justify-content: center; min-width: 36px; height: 36px; background: #262626; }
.cell.pair { justify-content: space-between; }
.cell:only-child { width: 36px; }
.mid { background: #545454; }
.soft { color: #c0c0c0; }
.blue { background: #4a70b0; color: #fff; }
.faint .cell { color: #a8a8a8; background: #2d2d2d; }
.faint .mid { background: #505050; }
.faint .c { opacity: .35; }

.toolbar2 { position: relative; display: flex; height: 48px; }
.pad { display: flex; align-items: flex-start; height: 48px; padding-top: 4px; background: #393939; border-radius: 0 0 8px 8px; }
.left { width: 134px; padding-left: 4px; }
.left .group { border-radius: 0 8px 8px 0; height: 36px; }
.center { width: 96px; padding: 11px 0 0 28px; gap: 11px; }
.center .cr { margin-top: 2px; color: #fff; }
.hex { width: 26px; height: 30px; margin-top: -4px; }
.right { width: 159px; padding-left: 17px; border-radius: 0 0 0 8px; }
.options { width: 126px; padding: 0 5px 0 15px; justify-content: space-between; }
.grow7 { flex: 753; } .grow8 { flex: 861; }

.stage { position: relative; flex: 1; min-height: 0; display: flex; }
.tools { width: 4px; padding-top: 18px; display: flex; flex-direction: column; }
.t { flex: none; background: #262626; border-radius: 0 4px 4px 0; }
.t.on { height: 66px; background: #4a70b0; border-radius: 0 4px 0 0; }
.t.one { height: 69px; margin: 1px 0 14px; border-radius: 0 0 4px 0; }
.t.four { height: 276px; background: repeating-linear-gradient(#262626 0 67px, #3a3a3a 67px 69px); }
.t.two { height: 137px; margin: 13px 0; background: linear-gradient(#262626 66px, #3a3a3a 66px 68px, #262626 68px); }
.t.last { height: 68px; }
.stats { flex: 1; padding: 14px 0 0 38px; line-height: 36px; color: #fff; text-shadow: 0 0 3px #000, 0 1px 2px #000; }
.stats p { height: 36px; }
.navcol { width: 195px; padding-top: 20px; display: flex; flex-direction: column; }
.axes { width: 160px; height: 160px; margin-bottom: 1px; }
.axes text { font: 600 20px Inter, sans-serif; text-anchor: middle; text-shadow: none; }
.round { align-self: flex-end; flex: none; display: grid; place-items: center; width: 56px; height: 56px; margin: 0 32px 4px 0; border-radius: 50%; background: #2b2b2b; color: #dcdcdc; }
.round svg { width: 32px; height: 32px; }
.npanel { width: 389px; margin-top: 4px; padding: 0 18px; background: #3c3c3c; border-radius: 8px 8px 0 0; overflow: hidden; }
h3 { display: flex; align-items: center; gap: 9px; font-weight: 400; font-size: 22px; color: #e6e6e6; }
.npanel h3 { height: 52px; margin-bottom: 11px; margin-right: -4px; }
.npanel .cd { margin-left: -2px; }
.grip { width: 22px; height: 10px; margin-left: auto; }
.cap { height: 44px; line-height: 44px; color: #c8c8c8; }
.npanel .block { margin-bottom: 5px; }
.fields { display: flex; justify-content: space-between; }
.stack { flex: 1; display: grid; gap: 2px; border-radius: 7px; overflow: hidden; box-shadow: 0 2px 0 #353535; }
.field { display: flex; align-items: center; height: 37px; padding: 0 26px 1px 31px; background: #545454; color: #e6e6e6; }
.field input { flex: 1; width: 0; text-align: right; }
.locks { width: 84px; padding-right: 17px; display: grid; gap: 2px; justify-items: end; color: #a0a0a0; }
.locks button { height: 37px; display: flex; align-items: center; }
.select { position: relative; display: flex; align-items: center; height: 36px; margin: 9px 0 0; border-radius: 7px; background: #262626; }
.select select { appearance: none; width: 100%; height: 100%; padding: 0 14px; color: #e6e6e6; }
.select .c { margin-left: -19px; pointer-events: none; }
.tabs { width: 40px; margin-left: 15px; padding: 8px 4px 0 0; display: flex; flex-direction: column; gap: 8px; background: #191919; }
.tabs button { flex: none; display: flex; justify-content: center; padding: 14px 0; border: 2px solid #3a3a3a; border-left: 0; border-radius: 0 8px 8px 0; background: #1d1d1d; color: #c8c8c8; }
.tabs .on { background: #303030; color: #fff; }
.tabs span { writing-mode: vertical-rl; line-height: 30px; }

.menu { position: absolute; background: #181818; border: 2px solid #242424; border-radius: 8px; z-index: 4; }
.main { left: -1px; top: 37px; width: 367px; padding: 5px 4px; border-top-left-radius: 0; }
.sub { left: 362px; top: -9px; width: 433px; padding: 6px 4px; }
.row { position: relative; height: 40px; padding: 2px 0; }
.sep { height: 14px; padding: 6px 7px; }
.sep::before { content: ""; display: block; height: 2px; background: #303030; }
.entry { display: flex; align-items: center; width: 100%; height: 36px; padding: 0 6px 0 16px; border-radius: 6px; color: #dcdcdc; text-align: left; }
.hot { background: #404040; color: #fff; }
.slot { width: 42px; }
.label { flex: 1; white-space: nowrap; }
u { position: relative; text-decoration: none; }
u::after { content: ""; position: absolute; left: 50%; bottom: -1px; width: 10px; height: 2px; margin-left: -5px; background: currentColor; }
kbd { font: inherit; color: #777; margin-right: 3px; }
.hot kbd { color: #999; }
.arrow { width: 12px; color: #8c8c8c; }
.hot .arrow { color: #aaa; }
.arrow svg { width: 12px; height: 14px; }
.tip { position: absolute; z-index: 5; left: 282px; top: 55px; width: max-content; padding: 18px 18px 14px 24px; background: #1c1c1c; border: 2px solid #262626; border-radius: 8px; color: #d6d6d6; white-space: nowrap; }
.tip b { font-weight: 400; margin-left: 12px; color: #8a97b5; }
.tip .dim { color: #a0a0a0; }

.side { width: 600px; flex: none; display: flex; flex-direction: column; gap: 7px; }
.outliner { height: 483px; border-radius: 0 0 8px 8px; background: #282828; overflow: hidden; }
.ohead { display: flex; height: 46px; padding: 0 12px 0 15px; }
.obtn { display: flex; align-items: center; justify-content: space-between; width: 64px; height: 39px; padding: 0 5px 0 8px; border: 2px solid #3c3c3c; border-radius: 8px; background: #282828; }
.second { margin-left: 10px; }
.sq { width: 40px; padding: 0; justify-content: center; margin-left: 10px; }
.lit { background: #505050; }
.push { margin-left: auto; }
.search { display: flex; align-items: center; gap: 14px; width: 230px; height: 39px; margin-left: 32px; padding: 0 8px; border: 2px solid #3c3c3c; border-radius: 8px; background: #1d1d1d; }
.search input { flex: 1; width: 0; }
.search input::placeholder { color: #606060; opacity: 1; }
.wide { margin-left: 106px; }
.tree { height: 437px; background: repeating-linear-gradient(#282828 0 40px, #2b2b2b 40px 80px); color: #c4c4c4; }
.tree li { display: flex; align-items: center; height: 40px; padding-top: 2px; padding-right: 24px; }
.n { padding-top: 2px; }
.lv0 { padding-left: 45px; gap: 14px; }
.lv0 .i, .lv1 .i { color: #d8d8d8; }
.lv1 { padding-left: 48px; }
.badge { display: grid; place-items: center; width: 40px; height: 36px; margin: 0 9px 0 11px; border: 2px solid #6a6a6a; border-radius: 8px; background: #4e4e4e; }
.none { background: none; border-color: transparent; }
.tint { background: #5a6a92; border-color: #7684a6; }
.lv2 { position: relative; padding-left: 95px; }
.lv2::before { content: ""; position: absolute; left: 57px; top: 0; height: 40px; border-left: 1px solid #6a6a6a; }
.muted::before { top: 10px; height: 30px; }
.picked::before { height: 30px; }
.lv2 .badge { margin-left: 11px; }
.w { margin-left: 45px; color: #6a88da; }
.m { margin-left: 12px; color: #4fbf9e; }
.o { color: #bf8c63; }
.muted { color: #757575; }
.muted .o { opacity: .55; } .muted .w, .muted .m { opacity: .5; }
.picked { background: #3b4b78; }
.picked .cr { color: #dcdcdc; }
.name { color: #f0ac43; }
.flags { margin-left: auto; display: flex; align-items: center; gap: 14px; color: #e4e4e4; }
.e { width: 26px; height: 26px; }
.dimmed { color: #a8a8a8; }
.flags input { appearance: none; display: grid; place-items: center; width: 20px; height: 20px; margin-right: 2px; border-radius: 2px; background: #e6e6e6; }
.flags input::after { content: ""; width: 7px; height: 12px; margin-bottom: 4px; border: solid #222; border-width: 0 3px 3px 0; transform: rotate(45deg); }

.props { flex: 1; min-height: 0; display: flex; flex-direction: column; border-radius: 8px 8px 0 0; background: #303030; overflow: hidden; }
.props .ohead { height: 50px; padding-top: 4px; flex: none; }
.pbody { flex: 1; min-height: 0; display: flex; }
.ptabs { width: 57px; padding-top: 17px; display: flex; flex-direction: column; align-items: center; background: #1d1d1d; color: #a8a8a8; overflow: hidden; }
.ptabs button { flex: none; height: 56px; padding-left: 4px; }
.ptabs button:first-child { margin-bottom: 14px; }
.pmain { flex: 1; min-width: 0; display: flex; overflow: hidden; padding-left: 16px; }
.scroll { flex: 1; margin-top: -12px; }
.phys { display: flex; align-items: center; width: 100%; height: 40px; margin-bottom: 4px; padding: 0 8px; border: 2px solid #3c3c3c; border-radius: 8px; background: #545454; color: #e6e6e6; }
.phys span { flex: 1; padding-left: 8px; }
.cloth { margin-top: 20px; height: 300px; border-radius: 8px; background: #3c3c3c; }
.cloth h3 { height: 53px; padding: 0 12px 0 15px; }
.lst { margin-left: auto; }
.cloth .grip { margin-left: 14px; }
.cloth h3 + .prow { margin-top: 15px; }
.prow { display: flex; align-items: center; height: 36px; margin-bottom: 8px; color: #e6e6e6; }
.prow span { width: 184px; text-align: right; margin-right: 20px; }
.prow input { flex: 1; width: 0; height: 36px; border-radius: 6px; background: #545454; text-align: center; box-shadow: 0 2px 0 #353535; }
.prow i { width: 8px; height: 8px; margin: 0 32px 0 18px; border-radius: 50%; background: #dcdcdc; }
.bar-v { width: 6px; height: 200px; margin: 181px 2px 0 4px; border-radius: 3px; background: #484848; }
</style>
